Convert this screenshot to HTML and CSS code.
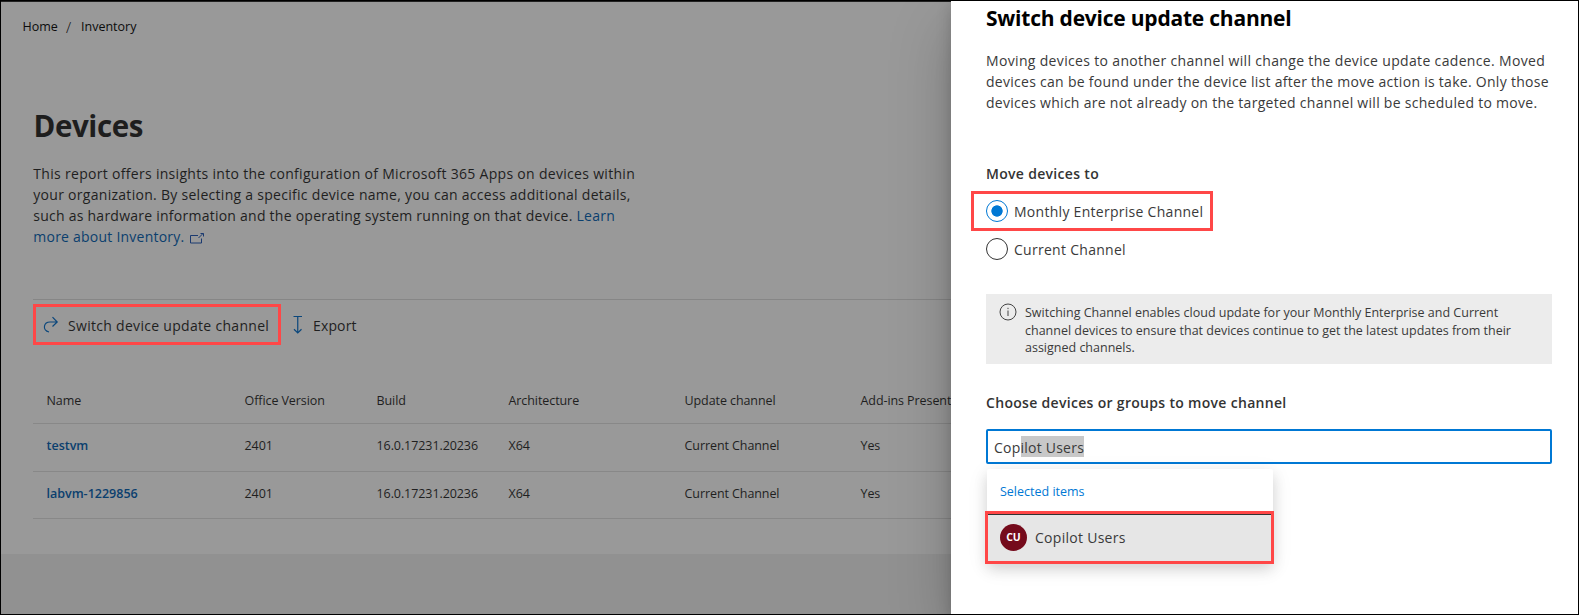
FILE: index.html
```html
<!DOCTYPE html>
<html lang="en">
<head>
<meta charset="utf-8">
<title>Devices</title>
<link rel="stylesheet" href="styles.css">
</head>
<body>
<div class="frame">
  <main class="page">
    <nav class="crumbs"><span class="crumb-home">Home</span><span class="crumb-sep">/</span><span class="crumb-inv">Inventory</span></nav>
    <h1 class="title">Devices</h1>
    <p class="intro"><span class="l1">This report offers insights into the configuration of Microsoft 365 Apps on devices within</span><br><span class="l2">your organization. By selecting a specific device name, you can access additional details,</span><br><span class="l3">such as hardware information and the operating system running on that device. <a class="link">Learn</a></span><br><a class="link l4">more about Inventory.</a><svg class="ext" width="16" height="12" viewBox="0 0 16 12" fill="none" stroke="#1b3a70"><path d="M9 3.500H1.500v7.500h11V6.500M9.500 6L14 1.500M11.500 1.500h3v3"/></svg></p>
    <div class="toolbar">
      <button class="cmd marked"><svg width="16" height="18" viewBox="0 0 16 18" fill="none" stroke="#0b477c" stroke-width="1.200"><path d="M6 16C2.500 15.200 1 12.500 1.500 10C2 7.500 4 6 7 6h7M9.500 1.200L14.200 6L9.500 10.500"/></svg><span class="cmd-switch">Switch device update channel</span></button>
      <button class="cmd export"><svg width="10" height="20" viewBox="0 0 10 20" fill="none" stroke="#0b477c" stroke-width="1.200"><path d="M.5 1.500h8.500M4.750 2v16M1 14.300l3.750 3.700L8.500 14.300"/></svg><span class="cmd-export">Export</span></button>
    </div>
    <div class="table">
      <div class="row head"><span>Name</span><span>Office Version</span><span>Build</span><span>Architecture</span><span>Update channel</span><span>Add-ins Present</span></div>
      <div class="row r1"><a class="dev">testvm</a><span>2401</span><span>16.0.17231.20236</span><span>X64</span><span>Current Channel</span><span>Yes</span></div>
      <div class="row r2"><a class="dev">labvm-1229856</a><span>2401</span><span>16.0.17231.20236</span><span>X64</span><span>Current Channel</span><span>Yes</span></div>
    </div>
    <div class="footer"></div>
  </main>
  <aside class="panel">
    <h2 class="panel-title">Switch device update channel</h2>
    <p class="desc"><span class="d1">Moving devices to another channel will change the device update cadence. Moved</span><br><span class="d2">devices can be found under the device list after the move action is take. Only those</span><br><span class="d3">devices which are not already on the targeted channel will be scheduled to move.</span></p>
    <div class="label move-label">Move devices to</div>
    <div class="option on"><i class="radio"></i><span>Monthly Enterprise Channel</span></div>
    <div class="option"><i class="radio"></i><span>Current Channel</span></div>
    <div class="note"><svg width="18" height="18" viewBox="0 0 18 18" fill="none" stroke="#444"><circle cx="9" cy="9" r="8"/><path d="M9 7.500v5.500M9 4.800v1.300"/></svg><p><span class="n1">Switching Channel enables cloud update for your Monthly Enterprise and Current</span><br><span class="n2">channel devices to ensure that devices continue to get the latest updates from their</span><br><span class="n3">assigned channels.</span></p></div>
    <div class="label choose-label">Choose devices or groups to move channel</div>
    <div class="input"><span class="typed">Cop</span><span class="sel">ilot Users</span></div>
    <div class="menu">
      <div class="menu-title">Selected items</div>
      <div class="menu-item"><span class="avatar">CU</span><span class="item-name">Copilot Users</span></div>
    </div>
  </aside>
</div>
</body>
</html>
```
FILE: styles.css
```css
* { box-sizing: border-box; }
body { margin: 0; font-family: "Open Sans", "Noto Sans", sans-serif; font-size: 14px; color: #1f1f1f; overflow: hidden; }
h1, h2, p { margin: 0; }
.frame { width: 1579px; height: 615px; border: 1px solid #000; display: flex; background: #999; overflow: hidden; white-space: nowrap; }
.page { width: 950px; flex: none; display: flex; flex-direction: column; border-top: 1px solid #222; background: #999; overflow: hidden; }
.crumbs { display: flex; height: 50px; padding: 15px 0 0 21.500px; font-size: 12.500px; line-height: 20px; color: #0c0c0c; }
.crumb-home { width: 43.500px; }
.crumb-sep { width: 15px; font-size: 15px; font-weight: 300; }
.title { margin: 51px 0 0 32.500px; height: 46px; line-height: 46px; font-size: 29.500px; font-weight: 700; letter-spacing: -.4px; color: #1e1e1e; }
.intro { margin: 14px 0 0 32.300px; height: 84px; line-height: 21px; }
.l1 { letter-spacing: .305px; }
.l2 { letter-spacing: .285px; }
.l3 { letter-spacing: .245px; }
.l4 { letter-spacing: .23px; }
.link { color: #0b3f6e; }
.ext { margin-left: 5px; vertical-align: -2px; }
.toolbar { margin: 52px 0 0 32px; height: 46px; border-top: 1px solid #868686; display: flex; padding-top: 4px; }
.cmd { font: inherit; color: inherit; background: none; border: 0; padding: 0; display: flex; align-items: center; height: 41px; }
.cmd span { padding-top: 2px; letter-spacing: .3px; }
.marked { width: 248px; border: 3px solid #ff4747; padding-left: 7px; gap: 9px; }
.export { margin-left: 12px; gap: 10px; }
.cmd .cmd-export { letter-spacing: .15px; }
.table { margin: 34px 0 0 32px; font-size: 12.500px; letter-spacing: -.08px; }
.row { display: grid; grid-template-columns: 198px 132px 132px 176px 176px 123px; padding-left: 13.500px; border-bottom: 1px solid #888; line-height: 20px; }
.head { height: 45px; padding-top: 12px; }
.r1 { height: 48px; padding-top: 12px; }
.r2 { height: 47px; padding-top: 12px; }
.dev { color: #0b3f6e; font-weight: 600; letter-spacing: 0; }
.footer { margin-top: 35px; flex: 1; background: #919191; }
.panel { position: relative; width: 627px; flex: none; background: #fff; padding-left: 35px; color: #3a3a3a; letter-spacing: .28px; box-shadow: 0 25px 58px rgba(0,0,0,.22), 0 5px 14px rgba(0,0,0,.18); }
.panel-title { padding-top: 1px; height: 47px; line-height: 32px; font-size: 21px; font-weight: 700; letter-spacing: -.22px; color: #000; }
.desc { line-height: 21px; margin-top: 2px; height: 63px; }
.d1 { letter-spacing: .335px; }
.label { font-weight: 600; line-height: 20px; color: #333; letter-spacing: .31px; }
.move-label { margin-top: 51px; }
.option { display: flex; align-items: center; gap: 6px; margin-left: -15px; padding-left: 15px; height: 36px; }
.on { width: 242px; height: 40px; border: 3px solid #ff4747; padding-left: 12px; margin-top: 7px; }
.radio { width: 22px; height: 22px; border: 1px solid #333; border-radius: 50%; }
.on .radio { border-color: #0078d4; background: radial-gradient(circle, #0078d4 5.300px, transparent 6px); }
.note { margin-top: 27px; width: 566px; height: 70px; background: #ececec; display: flex; padding: 9px 0 0 13px; gap: 8px; font-size: 12.500px; line-height: 17.500px; letter-spacing: 0; }
.note p { padding-top: 1px; }
.choose-label { margin-top: 29px; }
.input { margin-top: 16px; width: 566px; height: 35px; border: 2px solid #0078d4; border-radius: 2px; padding: 5px 0 0 6px; line-height: 21px; display: flex; letter-spacing: .23px; }
.input span { height: 21px; line-height: 23px; }
.sel { background: #c8c8c8; }
.menu { margin: 5px 0 0 1px; width: 286px; height: 94px; border-radius: 2px; background: #fff; box-shadow: 0 6px 14px rgba(0,0,0,.13), 0 5px 22px rgba(0,0,0,.08); }
.menu-title { height: 42px; padding: 13px 0 0 13px; font-size: 12.500px; line-height: 20px; letter-spacing: 0; color: #0078d4; }
.menu-item { margin-left: -2px; width: 289px; height: 53px; border: 3px solid #ff4747; background: #e6e6e6; box-shadow: inset 0 1px #333; display: flex; align-items: center; padding-left: 12px; gap: 8px; }
.avatar { width: 27px; height: 27px; border-radius: 50%; background: #750b1c; color: #fff; font-size: 10.500px; font-weight: 700; letter-spacing: 0; line-height: 27px; text-align: center; }
```
